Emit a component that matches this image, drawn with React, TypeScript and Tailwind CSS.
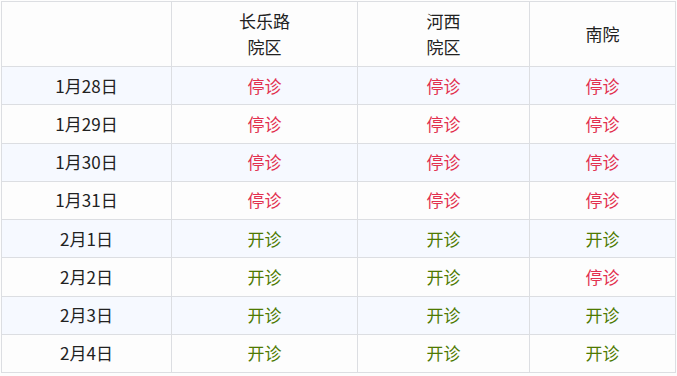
const ROWS: { date: string; status: [boolean, boolean, boolean] }[] = [
  { date: '1月28日', status: [false, false, false] },
  { date: '1月29日', status: [false, false, false] },
  { date: '1月30日', status: [false, false, false] },
  { date: '1月31日', status: [false, false, false] },
  { date: '2月1日', status: [true, true, true] },
  { date: '2月2日', status: [true, true, false] },
  { date: '2月3日', status: [true, true, true] },
  { date: '2月4日', status: [true, true, true] },
];

function Status({ open }: { open: boolean }) {
  return open ? (
    <span className="text-[#4e7a00]">开诊</span>
  ) : (
    <span className="text-[#e2304f]">停诊</span>
  );
}

export default function App() {
  return (
    <div
      className="min-h-screen bg-[#fdfdfd] pl-px pt-px text-[17px] text-[#222]"
      style={{ fontFamily: '"Microsoft YaHei", "Noto Sans CJK SC", sans-serif' }}
    >
      <table className="w-[675px] table-fixed border-collapse">
        <colgroup>
          <col className="w-[170px]" />
          <col className="w-[186px]" />
          <col className="w-[172px]" />
          <col />
        </colgroup>
        <thead>
          <tr className="h-[65px]">
            <th className="border border-[#dcdee2] font-normal" />
            <th className="border border-[#dcdee2] p-0 font-normal leading-[26px]">
              长乐路
              <br />
              院区
            </th>
            <th className="border border-[#dcdee2] p-0 font-normal leading-[26px]">
              河西
              <br />
              院区
            </th>
            <th className="border border-[#dcdee2] p-0 font-normal leading-[26px]">南院</th>
          </tr>
        </thead>
        <tbody>
          {ROWS.map((row, i) => (
            <tr key={row.date} className={`h-[38.25px] ${i % 2 === 0 ? 'bg-[#f6f9ff]' : 'bg-[#fdfdfd]'}`}>
              <td className="border border-[#dcdee2] p-0 text-center leading-[24px]">{row.date}</td>
              {row.status.map((open, j) => (
                <td key={j} className="border border-[#dcdee2] p-0 text-center leading-[24px]">
                  <Status open={open} />
                </td>
              ))}
            </tr>
          ))}
        </tbody>
      </table>
    </div>
  );
}
